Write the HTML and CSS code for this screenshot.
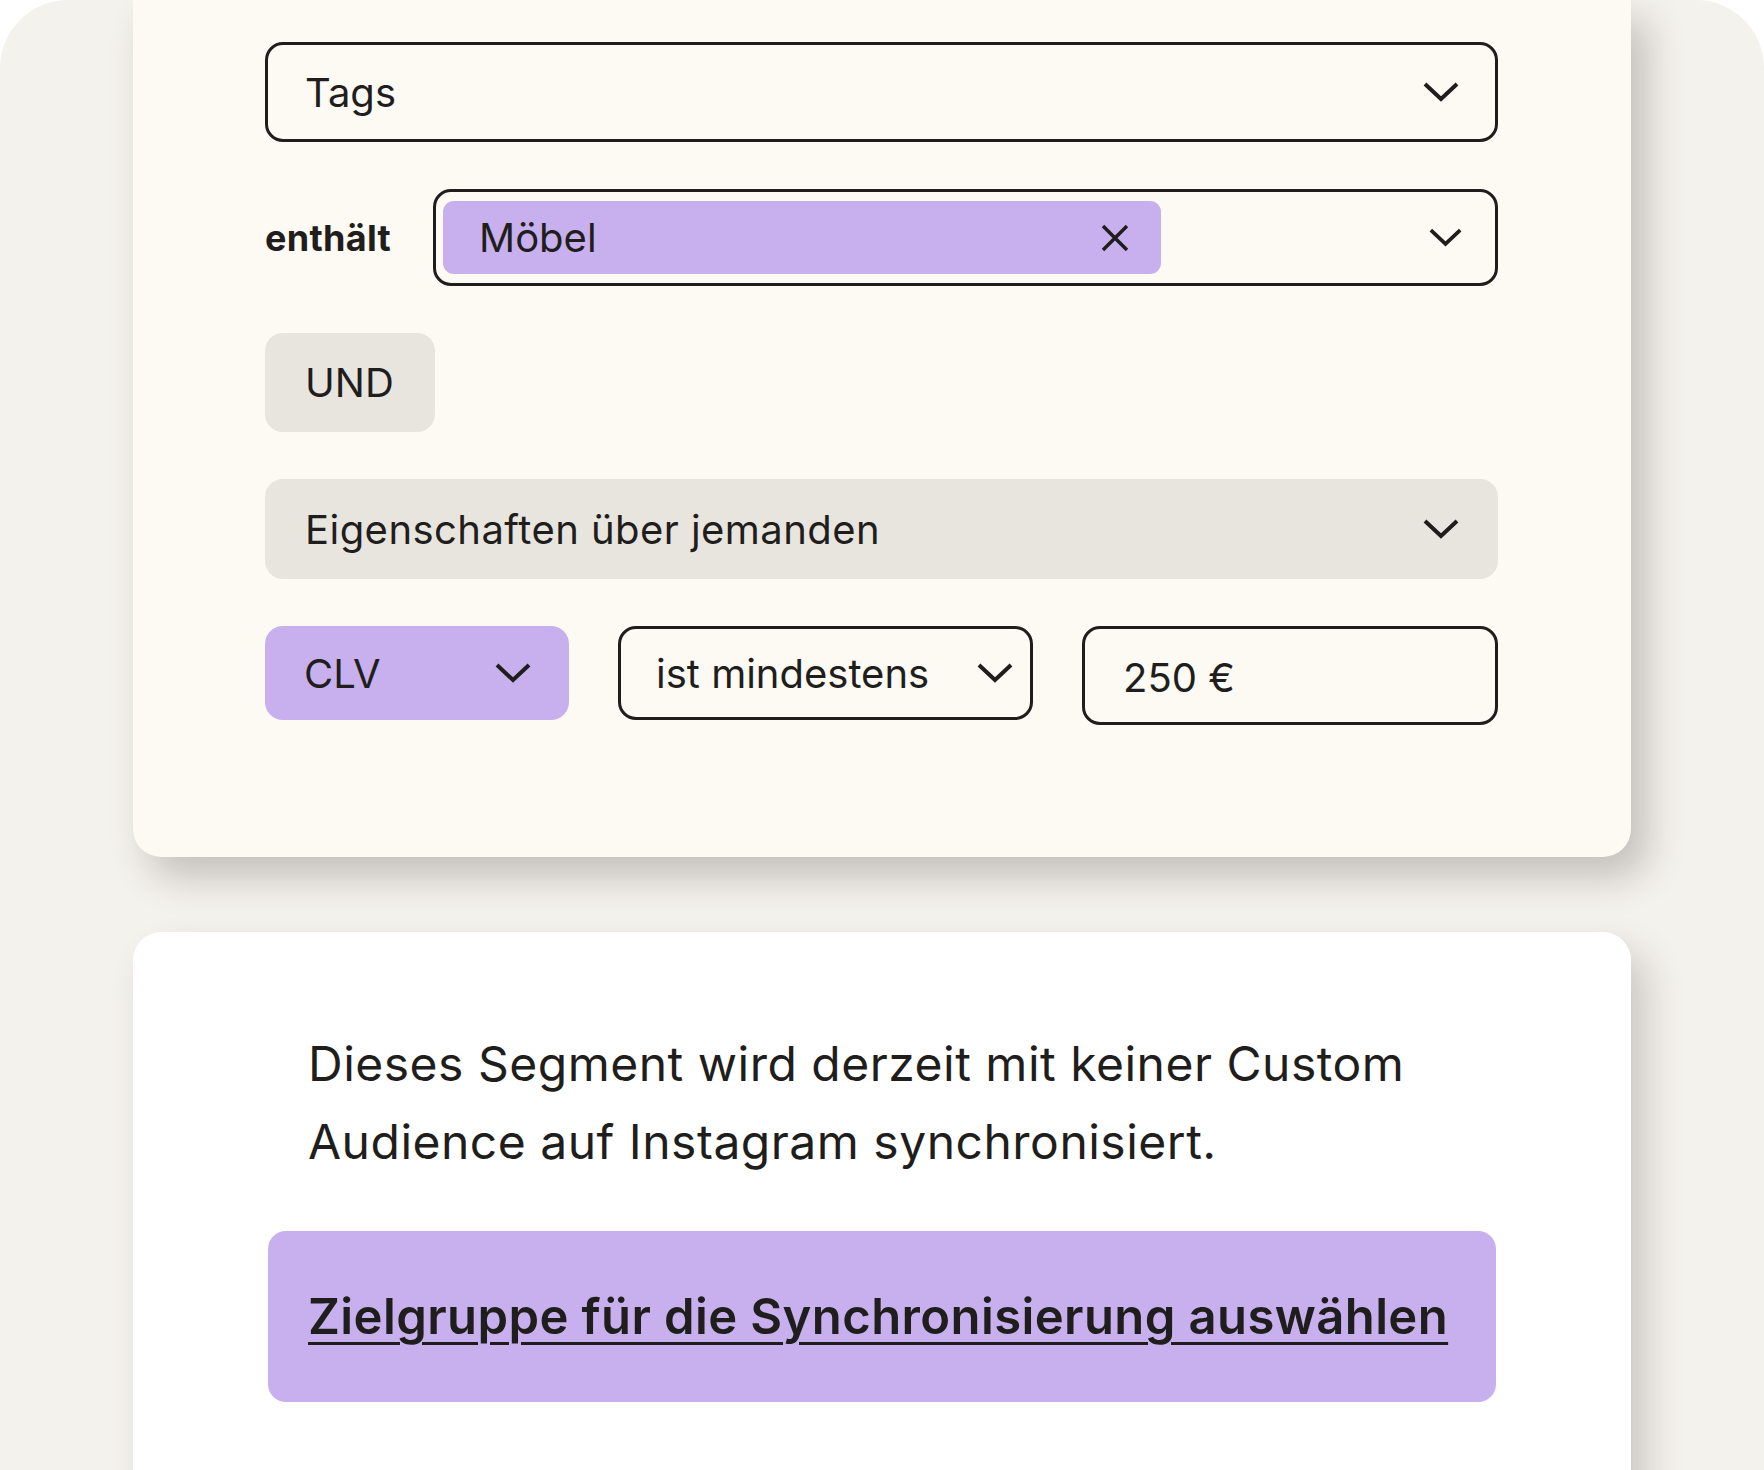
FILE: index.html
```html
<!DOCTYPE html>
<html lang="de">
<head>
<meta charset="utf-8">
<title>Segment</title>
<link rel="stylesheet" href="styles.css">
</head>
<body>
<div class="stage">
  <section class="card filters">
    <div class="select outlined tall">
      <span>Tags</span>
      <svg class="chev" viewBox="0 0 36 20"><path d="M2 2 L18 17 L34 2"/></svg>
    </div>

    <div class="contains-row">
      <span class="label">enthält</span>
      <div class="multi">
        <div class="chip">
          <span>Möbel</span>
          <svg class="x" viewBox="0 0 28 28"><path d="M2 2 L26 26 M26 2 L2 26"/></svg>
        </div>
        <svg class="chev small" viewBox="0 0 36 20"><path d="M2 2 L18 17 L34 2"/></svg>
      </div>
    </div>

    <div class="und">UND</div>

    <div class="select filled tall">
      <span class="wide">Eigenschaften über jemanden</span>
      <svg class="chev" viewBox="0 0 36 20"><path d="M2 2 L18 17 L34 2"/></svg>
    </div>

    <div class="cond-row">
      <div class="select purple cond">
        <span>CLV</span>
        <svg class="chev" viewBox="0 0 36 20"><path d="M2 2 L18 17 L34 2"/></svg>
      </div>
      <div class="select outlined cond op">
        <span>ist mindestens</span>
        <svg class="chev" viewBox="0 0 36 20"><path d="M2 2 L18 17 L34 2"/></svg>
      </div>
      <div class="value">250 €</div>
    </div>
  </section>

  <section class="card sync">
    <p class="note">Dieses Segment wird derzeit mit keiner Custom Audience auf Instagram synchronisiert.</p>
    <div class="cta"><a href="#">Zielgruppe für die Synchronisierung auswählen</a></div>
  </section>
</div>
</body>
</html>
```

FILE: styles.css
```css
* { box-sizing: border-box; }

html, body {
  margin: 0;
  padding: 0;
  background: #ffffff;
}

body {
  font-family: Inter, "Noto Sans", "Liberation Sans", sans-serif;
  color: #1f1e1c;
}

.stage {
  width: 1764px;
  height: 1470px;
  overflow: hidden;
  background: #f4f2ed;
  border-radius: 68px 68px 0 0;
  display: flex;
  flex-direction: column;
  align-items: flex-start;
  padding: 0 133px;
}

.card {
  width: 1498px;
  flex: none;
}

.filters {
  background: #fdf9f3;
  border-radius: 0 0 28px 28px;
  box-shadow: 16px 20px 38px rgba(40, 34, 28, 0.24);
  padding: 42px 133px 132px 132px;
  display: flex;
  flex-direction: column;
  gap: 47px;
  position: relative;
  z-index: 1;
}

.select {
  display: flex;
  align-items: center;
  justify-content: space-between;
  font-size: 40px;
  border-radius: 18px;
}

.wide {
  letter-spacing: 0.45px;
}

.tall {
  height: 100px;
  padding: 0 39px 0 40px;
}

.outlined {
  border: 3px solid #1f1e1c;
}

.outlined.tall {
  padding-left: 37px;
  padding-right: 36px;
}

.filled {
  background: #e8e5df;
}

.purple {
  background: #c8b0ee;
}

.chev {
  width: 36px;
  height: 20px;
  flex: none;
  fill: none;
  stroke: #1f1e1c;
  stroke-width: 4;
}

.chev.small {
  width: 33px;
  height: 19px;
}

.contains-row {
  display: flex;
  align-items: center;
  gap: 0;
}

.label {
  width: 168px;
  font-size: 36px;
  font-weight: 700;
  flex: none;
  letter-spacing: 0.3px;
}

.multi {
  flex: 1;
  height: 97px;
  border: 3px solid #1f1e1c;
  border-radius: 18px;
  padding: 9px 33px 9px 7px;
  display: flex;
  align-items: center;
  justify-content: space-between;
}

.chip {
  width: 718px;
  height: 73px;
  background: #c8b0ee;
  border-radius: 11px;
  display: flex;
  align-items: center;
  justify-content: space-between;
  padding: 0 32px 0 36px;
  font-size: 40px;
}

.x {
  width: 28px;
  height: 28px;
  fill: none;
  stroke: #1f1e1c;
  stroke-width: 3.5;
}

.und {
  align-self: flex-start;
  width: 170px;
  height: 99px;
  background: #e8e5df;
  border-radius: 18px;
  display: flex;
  align-items: center;
  padding-left: 40px;
  font-size: 40px;
}

.cond-row {
  display: grid;
  grid-template-columns: 304px 415px 416px;
  gap: 49px;
  align-items: start;
}

.cond {
  height: 94px;
}

.purple.cond {
  padding: 0 38px 0 39px;
}

.op {
  padding: 0 17px 0 35px;
}

.value {
  height: 99px;
  border: 3px solid #1f1e1c;
  border-radius: 18px;
  display: flex;
  align-items: center;
  padding-left: 38px;
  font-size: 40px;
  padding-top: 4px;
}

.sync {
  margin-top: 75px;
  background: #ffffff;
  border-radius: 28px 28px 0 0;
  box-shadow: 16px 20px 38px rgba(40, 34, 28, 0.2);
  padding: 93px 135px 200px 135px;
}

.note {
  margin: 0;
  padding: 0 40px;
  font-size: 48px;
  line-height: 78px;
  letter-spacing: 0.5px;
}

.cta {
  margin-top: 50px;
  height: 171px;
  background: #c8b0ee;
  border-radius: 18px;
  display: flex;
  align-items: center;
  padding: 0 40px;
}

.cta a {
  color: #1f1e1c;
  font-size: 49px;
  font-weight: 600;
  letter-spacing: 0.4px;
  text-decoration: underline;
  text-decoration-thickness: 3px;
  text-underline-offset: 8px;
}
```
